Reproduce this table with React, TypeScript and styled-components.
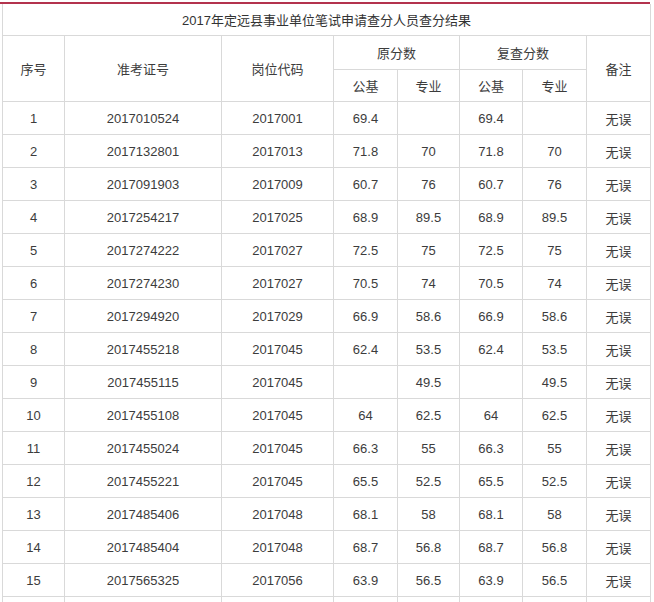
import React from 'react'
import styled, { createGlobalStyle } from 'styled-components'

const GlobalStyle = createGlobalStyle`
  body {
    margin: 0;
    background: #fff;
    font-family: "Liberation Sans", "Noto Sans CJK SC", sans-serif;
  }
`

const Wrapper = styled.div`
  width: 650px;
  margin-top: 2px;
  border-top: 2px solid #b3334d;
`

const Table = styled.table`
  margin-left: 2px;
  width: 648px;
  border-collapse: collapse;
  table-layout: fixed;
  color: #3c3c3c;
  font-size: 13px;
`

const Cell = styled.td<{ h?: number }>`
  border: 1px solid #d9d9d9;
  height: ${(p) => p.h ?? 32}px;
  padding: 0;
  text-align: center;
  vertical-align: middle;
  white-space: nowrap;
`

const TitleCell = styled(Cell)`
  font-size: 13px;
  color: #333;
  border-top: none;
`

const widths = [62, 157, 112, 64, 62, 63, 64, 64]

const rows: string[][] = [
  ['1', '2017010524', '2017001', '69.4', '', '69.4', ''],
  ['2', '2017132801', '2017013', '71.8', '70', '71.8', '70'],
  ['3', '2017091903', '2017009', '60.7', '76', '60.7', '76'],
  ['4', '2017254217', '2017025', '68.9', '89.5', '68.9', '89.5'],
  ['5', '2017274222', '2017027', '72.5', '75', '72.5', '75'],
  ['6', '2017274230', '2017027', '70.5', '74', '70.5', '74'],
  ['7', '2017294920', '2017029', '66.9', '58.6', '66.9', '58.6'],
  ['8', '2017455218', '2017045', '62.4', '53.5', '62.4', '53.5'],
  ['9', '2017455115', '2017045', '', '49.5', '', '49.5'],
  ['10', '2017455108', '2017045', '64', '62.5', '64', '62.5'],
  ['11', '2017455024', '2017045', '66.3', '55', '66.3', '55'],
  ['12', '2017455221', '2017045', '65.5', '52.5', '65.5', '52.5'],
  ['13', '2017485406', '2017048', '68.1', '58', '68.1', '58'],
  ['14', '2017485404', '2017048', '68.7', '56.8', '68.7', '56.8'],
  ['15', '2017565325', '2017056', '63.9', '56.5', '63.9', '56.5'],
]

export default function App() {
  return (
    <Wrapper>
      <GlobalStyle />
      <Table>
        <colgroup>
          {widths.map((w, i) => (
            <col key={i} style={{ width: w }} />
          ))}
        </colgroup>
        <tbody>
          <tr>
            <TitleCell colSpan={8} h={31}>
              2017年定远县事业单位笔试申请查分人员查分结果
            </TitleCell>
          </tr>
          <tr>
            <Cell rowSpan={2}>序号</Cell>
            <Cell rowSpan={2}>准考证号</Cell>
            <Cell rowSpan={2}>岗位代码</Cell>
            <Cell colSpan={2} h={33}>原分数</Cell>
            <Cell colSpan={2} h={33}>复查分数</Cell>
            <Cell rowSpan={2}>备注</Cell>
          </tr>
          <tr>
            <Cell h={31}>公基</Cell>
            <Cell h={31}>专业</Cell>
            <Cell h={31}>公基</Cell>
            <Cell h={31}>专业</Cell>
          </tr>
          {rows.map((r) => (
            <tr key={r[0]}>
              {r.map((v, i) => (
                <Cell key={i}>{v}</Cell>
              ))}
              <Cell>无误</Cell>
            </tr>
          ))}
          <tr>
            {widths.map((_, i) => (
              <Cell key={i} />
            ))}
          </tr>
        </tbody>
      </Table>
    </Wrapper>
  )
}
